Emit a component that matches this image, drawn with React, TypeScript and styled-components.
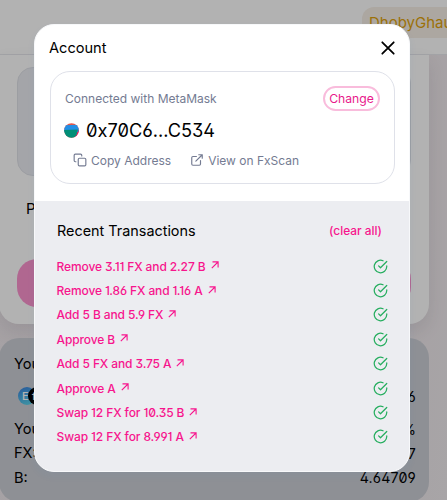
import React from "react";
import styled, { createGlobalStyle } from "styled-components";

const Global = createGlobalStyle`
  * { box-sizing: border-box; }
  body {
    margin: 0;
    overflow: hidden;
    font-family: Inter, "Liberation Sans", sans-serif;
    font-feature-settings: "ss01" on, "zero" on, "cv01" on, "cv03" on, "cv04" on;
    color: #000;
  }
`;

const Page = styled.div`
  position: relative;
  width: 447px;
  height: 500px;
  overflow: hidden;
  background: linear-gradient(100deg, #eee8ec 0%, #ede6ea 75%, #f1ecef 100%);
`;

const Header = styled.header`
  height: 55px;
  background: #fff;
  border-bottom: 1px solid #e9eaee;
  display: flex;
  justify-content: flex-end;
  align-items: flex-start;
`;

const Network = styled.div`
  width: 88px;
  height: 31px;
  margin: 7px -3px 0 0;
  padding-left: 7px;
  border-radius: 12px 0 0 12px;
  background: #f7f0e7;
  color: #e0a20c;
  font-size: 15px;
  line-height: 31px;
  white-space: nowrap;
`;

const SwapCard = styled.section`
  width: 430px;
  height: 269px;
  margin-left: -1px;
  padding: 12px 18px;
  background: #fff;
  border-radius: 0 0 20px 20px;
  box-shadow: 0 8px 18px rgba(60, 50, 70, 0.1);
  display: flex;
  flex-direction: column;
`;

const Field = styled.div`
  height: 109px;
  border-radius: 16px;
  background: #ebedf2;
  border: 1px solid #e0e2e9;
`;

const PriceLabel = styled.div`
  margin: 23px 0 0 9px;
  font-size: 15px;
  line-height: 20px;
`;

const SwapButton = styled.div`
  height: 48px;
  margin-top: 40px;
  border-radius: 20px;
  background: #fc94cf;
`;

const PositionCard = styled.section`
  width: 430px;
  height: 164px;
  margin: 14px 0 0 -1px;
  padding: 15px 13px 13px 15px;
  border-radius: 20px;
  background: #cccfd6;
  font-size: 14.6px;
`;

const PositionRow = styled.div<{ $height: number }>`
  height: ${(p) => p.$height}px;
  display: flex;
  align-items: center;
  justify-content: space-between;
`;

const Amount = styled.span`
  font-size: 14.2px;
  letter-spacing: 0.15px;
`;

const Tokens = styled.div`
  display: flex;
  padding-left: 4px;
`;

const Token = styled.span<{ $dark?: boolean }>`
  width: 18px;
  height: 18px;
  margin-right: -8px;
  border-radius: 50%;
  background: ${(p) => (p.$dark ? "#000" : "linear-gradient(160deg, #3880de, #5edceb)")};
  color: #fff;
  font-size: 11px;
  line-height: 18px;
  font-weight: 500;
  padding-left: 4px;
`;

const Overlay = styled.div`
  position: absolute;
  inset: 0;
  background: rgba(0, 0, 0, 0.3);
  display: flex;
  align-items: flex-start;
  padding: 24px 0 0 34px;
`;

const Dialog = styled.div`
  width: 376px;
  height: 448px;
  border-radius: 20px;
  border: 1px solid #f7f8fa;
  background: #fff;
  overflow: hidden;
  box-shadow: 0 4px 8px rgba(47, 128, 237, 0.05);
  display: flex;
  flex-direction: column;
`;

const DialogHead = styled.div`
  height: 46px;
  padding: 0 15px 0 14px;
  display: flex;
  align-items: center;
  justify-content: space-between;
  font-size: 14.6px;
  svg { margin-right: -1px; }
`;

const AccountCard = styled.div`
  height: 113px;
  margin: 0 14px 0 15px;
  border: 1px solid #dfe1e9;
  border-radius: 20px;
  padding: 13px 14px 0;
  color: #747b92;
`;

const AccountTop = styled.div`
  height: 26px;
  display: flex;
  align-items: center;
  justify-content: space-between;
  font-size: 12px;
`;

const Change = styled.button`
  width: 57px;
  height: 25px;
  padding: 0;
  border: 2px solid #f9bcdc;
  border-radius: 13px;
  background: #fff;
  color: #e8188b;
  font: inherit;
  font-feature-settings: inherit;
  font-size: 12.2px;
`;

const Address = styled.div`
  height: 25px;
  margin: 7px 0 0 -1px;
  display: flex;
  align-items: center;
  gap: 7px;
  color: #000;
  font-size: 18.2px;
  line-height: 25px;
`;

const Actions = styled.div`
  display: flex;
  gap: 19px;
  height: 22px;
  margin: 6px 0 0 8px;
  font-size: 12px;
`;

const Action = styled.a`
  display: flex;
  align-items: center;
  gap: 4px;
  svg { flex: none; }
`;

const Recent = styled.div`
  flex: 1;
  margin-top: 17px;
  padding: 18px 21px 0 22px;
  background: #ecedf1;
`;

const RecentHead = styled.div`
  height: 23px;
  margin-bottom: 12px;
  display: flex;
  align-items: center;
  justify-content: space-between;
  font-size: 14.4px;
`;

const Clear = styled.a`
  margin-right: 6px;
  color: #f7158d;
  font-size: 11.9px;
  font-weight: 500;
`;

const Transaction = styled.div`
  height: 24.4px;
  margin-left: -0.5px;
  display: flex;
  align-items: center;
  justify-content: space-between;
  color: #f7158d;
  font-size: 12px;
  font-weight: 500;
  letter-spacing: -0.11px;
`;

const TransactionLink = styled.a`
  display: flex;
  align-items: center;
  gap: 5px;
  white-space: nowrap;
  svg { margin-bottom: 2px; }
`;

const transactions = [
  "Remove 3.11 FX and 2.27 B",
  "Remove 1.86 FX and 1.16 A",
  "Add 5 B and 5.9 FX",
  "Approve B",
  "Add 5 FX and 3.75 A",
  "Approve A",
  "Swap 12 FX for 10.35 B",
  "Swap 12 FX for 8.991 A",
];

const Arrow = () => (
  <svg width="8" height="8" viewBox="0 0 8 8" fill="none" stroke="currentColor" strokeWidth="1.1">
    <path d="M1.5.9h5.6v5.6M7 1 .8 7.2" />
  </svg>
);

const Check = () => (
  <svg width="15" height="15" viewBox="0 0 24 24" fill="none" stroke="#27ae60" strokeWidth="2" strokeLinecap="round" strokeLinejoin="round">
    <path d="M22 11.08V12a10 10 0 1 1-5.93-9.14" />
    <path d="M22 4 12 14.01l-3-3" />
  </svg>
);

const Close = () => (
  <svg width="14" height="14" viewBox="0 0 14 14" fill="none" stroke="#000" strokeWidth="1.8" strokeLinecap="round">
    <path d="m1.3 1.3 11.4 11.4M12.7 1.3 1.3 12.7" />
  </svg>
);

const Avatar = () => (
  <svg width="15" height="15" viewBox="0 0 15 15">
    <defs>
      <clipPath id="avatar"><circle cx="7.5" cy="7.5" r="7.3" /></clipPath>
    </defs>
    <g clipPath="url(#avatar)">
      <path fill="#e2574c" d="M0 0h15v15H0z" />
      <path fill="#238fe5" d="m0 2.3 15-.5V9H0z" />
      <path fill="#e80b6a" d="m15 6.7-5 9h5z" />
      <path fill="#018e77" d="m0 7 13.8-.5L12.5 12 9.8 15H0z" />
    </g>
  </svg>
);

const Copy = () => (
  <svg width="14" height="14" viewBox="0 0 24 24" fill="none" stroke="currentColor" strokeWidth="2" strokeLinecap="round" strokeLinejoin="round">
    <rect x="9" y="9" width="13" height="13" rx="2" />
    <path d="M5 15H4a2 2 0 0 1-2-2V4a2 2 0 0 1 2-2h9a2 2 0 0 1 2 2v1" />
  </svg>
);

const External = () => (
  <svg width="14" height="14" viewBox="0 0 24 24" fill="none" stroke="currentColor" strokeWidth="2" strokeLinecap="round" strokeLinejoin="round">
    <path d="M18 13v6a2 2 0 0 1-2 2H5a2 2 0 0 1-2-2V8a2 2 0 0 1 2-2h6M15 3h6v6M10 14 21 3" />
  </svg>
);

export default function App() {
  return (
    <>
      <Global />
      <Page>
        <Header>
          <Network>DhobyGhau</Network>
        </Header>
        <SwapCard>
          <Field />
          <PriceLabel>P</PriceLabel>
          <SwapButton />
        </SwapCard>
        <PositionCard>
          <PositionRow $height={22}>You</PositionRow>
          <PositionRow $height={42}>
            <Tokens>
              <Token>E</Token>
              <Token $dark>f</Token>
            </Tokens>
            <Amount>6</Amount>
          </PositionRow>
          <PositionRow $height={24}>
            <span>You</span>
            <Amount>%</Amount>
          </PositionRow>
          <PositionRow $height={24}>
            <span>FX:</span>
            <Amount>7</Amount>
          </PositionRow>
          <PositionRow $height={25}>
            <span>B:</span>
            <Amount>4.64709</Amount>
          </PositionRow>
        </PositionCard>
        <Overlay>
          <Dialog>
            <DialogHead>
              Account
              <Close />
            </DialogHead>
            <AccountCard>
              <AccountTop>
                Connected with MetaMask
                <Change>Change</Change>
              </AccountTop>
              <Address>
                <Avatar />
                0x70C6...C534
              </Address>
              <Actions>
                <Action><Copy />Copy Address</Action>
                <Action><External />View on FxScan</Action>
              </Actions>
            </AccountCard>
            <Recent>
              <RecentHead>
                Recent Transactions
                <Clear>(clear all)</Clear>
              </RecentHead>
              {transactions.map((text) => (
                <Transaction key={text}>
                  <TransactionLink>{text}<Arrow /></TransactionLink>
                  <Check />
                </Transaction>
              ))}
            </Recent>
          </Dialog>
        </Overlay>
      </Page>
    </>
  );
}
